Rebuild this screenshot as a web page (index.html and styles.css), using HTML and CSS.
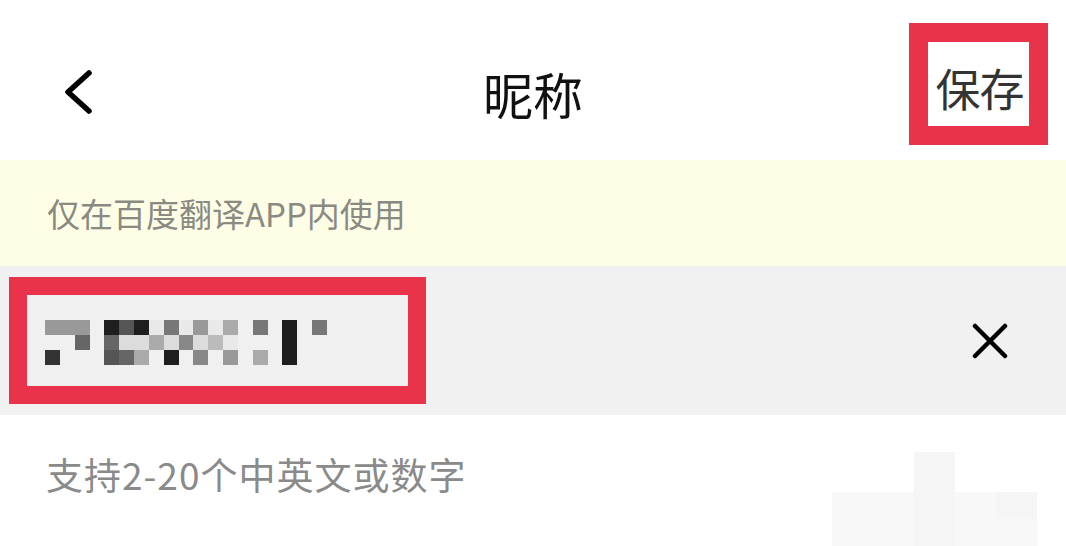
FILE: index.html
```html
<!DOCTYPE html>
<html lang="zh">
<head>
<meta charset="utf-8">
<title>昵称</title>
<link rel="stylesheet" href="styles.css">
</head>
<body>
<div class="page">
  <header class="topbar">
    <button class="back" aria-label="返回">
      <svg width="34" height="48" viewBox="0 0 34 48"><polyline points="27,5 6,24 27,43" fill="none" stroke="#000" stroke-width="5.5" stroke-linecap="round" stroke-linejoin="round"/></svg>
    </button>
    <h1 class="title">昵称</h1>
    <span class="save">保存</span>
  </header>

  <div class="notice">仅在百度翻译APP内使用</div>

  <div class="field">
    <div class="value-box">
      <div class="mosaic">
        <i class="s7"></i><i class="s7"></i><i class="s7"></i><i></i><i class="s1"></i><i class="s3"></i><i class="s1"></i><i class="lt"></i><i class="s5"></i><i class="lt"></i><i class="s7"></i><i class="lt"></i><i class="s8"></i><i></i><i class="s5"></i><i></i><i class="s1"></i><i></i><i class="s5"></i>
        <i></i><i></i><i class="s4"></i><i></i><i class="s4"></i><i class="s10"></i><i class="s10"></i><i class="s8"></i><i class="s10"></i><i class="s6"></i><i class="s10"></i><i class="s9"></i><i class="lt"></i><i></i><i></i><i></i><i class="s1"></i><i></i><i></i>
        <i class="s2"></i><i></i><i></i><i></i><i class="s3"></i><i class="s4"></i><i class="s8"></i><i></i><i class="s1"></i><i></i><i class="s6"></i><i></i><i class="s7"></i><i></i><i class="s8"></i><i></i><i class="s1"></i><i></i><i></i>
      </div>
    </div>
    <button class="clear" aria-label="清除">
      <svg width="36" height="36" viewBox="0 0 36 36"><path d="M3 3 L33 33 M33 3 L3 33" stroke="#000" stroke-width="4.5" stroke-linecap="round"/></svg>
    </button>
  </div>

  <p class="hint">支持2-20个中英文或数字</p>

  <div class="smudge" aria-hidden="true">
    <i></i><i></i><i class="f2"></i><i></i><i></i>
    <i class="f1"></i><i class="f1"></i><i class="f2"></i><i class="f1"></i><i class="f2"></i>
    <i class="f1"></i><i class="f1"></i><i class="f2"></i><i class="f1"></i><i class="f1"></i>
  </div>
</div>
</body>
</html>
```
FILE: styles.css
```css
* { box-sizing: border-box; }
html, body { margin: 0; padding: 0; background: #fff; }
body {
  width: 1066px;
  height: 546px;
  overflow: hidden;
  font-family: "Noto Sans CJK SC", "Noto Sans", sans-serif;
}
.page { position: relative; width: 1066px; height: 546px; }

.topbar {
  height: 160px;
  display: flex;
  align-items: center;
  position: relative;
  padding: 0 18px 0 62px;
}
.back {
  border: 0;
  background: none;
  padding: 0;
  width: 34px;
  height: 48px;
  display: flex;
  align-self: flex-start;
  margin: 68px 0 0 0;
}
.title {
  position: absolute;
  left: 0;
  right: 0;
  top: 60px;
  margin: 0;
  text-align: center;
  font-size: 50px;
  font-weight: 400;
  line-height: 66px;
  color: #111;
  pointer-events: none;
}
.save {
  margin-left: auto;
  align-self: flex-start;
  margin-top: 23px;
  width: 139px;
  height: 122px;
  border: 19px solid #e8334a;
  padding: 22px 0 0 2px;
  font-size: 45px;
  line-height: 48px;
  color: #333;
  text-align: center;
  letter-spacing: -1px;
}

.notice {
  height: 106px;
  background: #fefee6;
  padding: 0 0 0 47px;
  display: flex;
  align-items: center;
  font-size: 33px;
  color: #8a8a82;
}

.field {
  height: 149px;
  background: #f1f1f1;
  display: flex;
  align-items: center;
  padding: 0 58px 0 9px;
}
.value-box {
  width: 417px;
  height: 127px;
  border: 18px solid #e8334a;
  background: #f0f0f0;
  padding: 25px 0 0 18px;
}
.mosaic {
  width: 282px;
  height: 45px;
  display: grid;
  grid-template-columns: repeat(19, 1fr);
  grid-template-rows: repeat(3, 15px);
}
.mosaic i { display: block; }
.mosaic .s1 { background: #1e1e1e; }
.mosaic .s2 { background: #333; }
.mosaic .s3 { background: #555; }
.mosaic .s4 { background: #666; }
.mosaic .s5 { background: #777; }
.mosaic .s6 { background: #888; }
.mosaic .s7 { background: #999; }
.mosaic .s8 { background: #aaa; }
.mosaic .s9 { background: #bbb; }
.mosaic .s10 { background: #dcdcdc; }
.mosaic .lt { background: #e9e9e9; }

.clear {
  margin-left: auto;
  border: 0;
  background: none;
  padding: 0;
  width: 36px;
  height: 36px;
  display: flex;
}

.hint {
  margin: 0;
  padding: 34px 0 0 46px;
  font-size: 37px;
  line-height: 50px;
  color: #8a8a8a;
  letter-spacing: 1px;
}

.smudge {
  position: absolute;
  left: 832px;
  top: 452px;
  width: 205px;
  height: 94px;
  display: grid;
  grid-template-columns: repeat(5, 1fr);
  grid-template-rows: 40px 27px 27px;
}
.smudge i { display: block; }
.smudge .f1 { background: #f8f8f8; }
.smudge .f2 { background: #f5f5f5; }
```
